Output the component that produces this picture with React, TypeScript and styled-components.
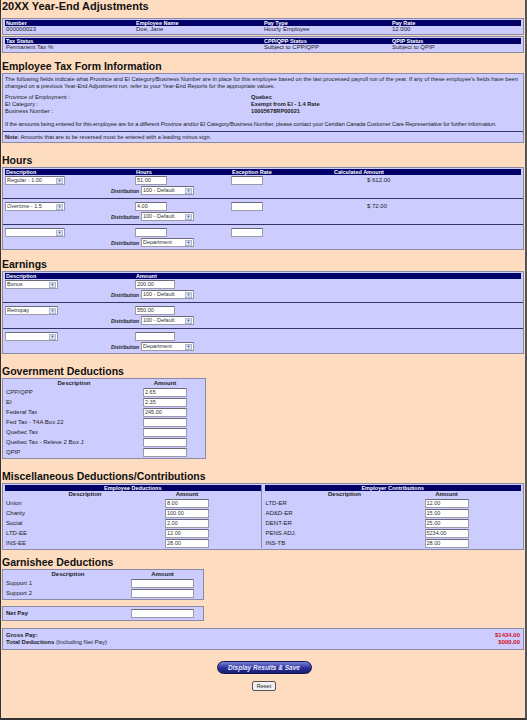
import React from 'react';
import styled, { createGlobalStyle } from 'styled-components';

const Global = createGlobalStyle`
  html, body { margin: 0; padding: 0; background: #fddcbf; }
  * { box-sizing: border-box; }
`;

const Page = styled.div`
  width: 527px;
  height: 720px;
  background: #fddcbf;
  border-left: 1px solid #333;
  border-right: 2px solid #555;
  border-bottom: 2px solid #333;
  font-family: 'Liberation Sans', Arial, sans-serif;
  font-size: 6px;
  color: #222;
  padding: 0 1px;
  overflow: hidden;
`;

const Title = styled.h1`
  margin: 0;
  font-size: 11px;
  line-height: 13px;
  font-weight: bold;
  color: #111;
`;

const Heading = styled.h2`
  margin: ${p => p.$top ?? 8}px 0 1px 0;
  font-size: 10.5px;
  line-height: 12px;
  font-weight: bold;
  color: #111;
`;

const Panel = styled.div`
  background: #ccccff;
  border: 1px solid #8a8aa6;
  width: ${p => p.$w ?? '100%'};
  padding: 1px 2px 1px 2px;
  margin-top: ${p => p.$mt ?? 0}px;
`;

const Grid = styled.div`
  display: grid;
  grid-template-columns: ${p => p.$cols};
  align-items: center;
`;

const Bar = styled(Grid)`
  background: #000066;
  color: #fff;
  font-weight: bold;
  height: 6px;
  line-height: 6px;
  font-size: 5.5px;
  text-align: ${p => p.$center ? 'center' : 'left'};
  padding: 0 1px;
`;

const Cell = styled.div`
  line-height: 7px;
  padding: 0 1px;
  text-align: ${p => p.$align ?? 'left'};
  font-weight: ${p => p.$bold ? 'bold' : 'normal'};
  width: ${p => p.$w ? `${p.$w}px` : 'auto'};
`;

const Text = styled.div`
  line-height: 7px;
  font-size: 5.7px;
  margin: ${p => p.$m ?? '0'};
`;

const Sep = styled.div`
  height: 1px;
  background: #333366;
  margin: 2px -2px;
`;

const Input = styled.div`
  width: ${p => p.$w}px;
  height: 9px;
  background: #fff;
  border: 1px solid #9a9aa8;
  border-top-color: #6a6a78;
  font-size: 5.5px;
  line-height: 7px;
  padding-left: 1px;
  color: #333;
`;

const SelectBox = styled(Input)`
  display: flex;
  justify-content: space-between;
  padding-right: 1px;
`;

const Arrow = styled.span`
  width: 7px;
  height: 6px;
  margin-top: 0.5px;
  background: #dde3f4;
  border: 1px solid #b0b8d0;
  font-size: 4px;
  line-height: 4px;
  text-align: center;
  color: #4a5a90;
`;

const DistLabel = styled.span`
  font-style: italic;
  font-weight: bold;
  font-size: 5px;
  margin-right: 2px;
`;

const EntryRow = styled.div`
  display: grid;
  grid-template-columns: 130px 96px 102px 1fr;
  row-gap: 1px;
  padding: 1px 0;
`;

const DistRow = styled.div`
  grid-column: 1 / 3;
  display: flex;
  align-items: center;
  justify-content: flex-end;
  padding-right: 37px;
`;

const Amount = styled.div`
  padding-left: 34px;
  line-height: 9px;
`;

const Red = styled.span`
  color: #d01020;
  font-weight: bold;
`;

const Center = styled.div`
  display: flex;
  flex-direction: column;
  align-items: center;
  gap: 7px;
  margin-top: 11px;
  padding-left: 2px;
`;

const BigButton = styled.div`
  width: 95px;
  height: 13px;
  border-radius: 7px;
  background: linear-gradient(#7a80d8, #2a2f9a 55%, #1a1d70);
  border: 1px solid #111450;
  color: #e8eaff;
  font-style: italic;
  font-weight: bold;
  font-size: 6.5px;
  line-height: 11px;
  text-align: center;
`;

const Reset = styled.div`
  width: 24px;
  height: 10px;
  background: #f0f0f0;
  border: 1px solid #555;
  border-radius: 2px;
  font-size: 5.5px;
  line-height: 8px;
  text-align: center;
`;

const Split = styled.div`
  display: grid;
  grid-template-columns: 1fr 1fr;
  gap: 3px;
`;

const Sub = styled.div`
  border-right: ${p => p.$line ? '1px solid #8a8aa6' : 'none'};
`;

const Select = ({ v, w = 60 }: { v: string; w?: number }) => (
  <SelectBox $w={w}><span>{v}</span><Arrow>▼</Arrow></SelectBox>
);

type Entry = { d: string; h: string; amt?: string; dist: string };

const hours: Entry[] = [
  { d: 'Regular - 1.00', h: '51.00', amt: '$ 612.00', dist: '100 - Default' },
  { d: 'Overtime - 1.5', h: '4.00', amt: '$ 72.00', dist: '100 - Default' },
  { d: '', h: '', dist: 'Department' },
];
const earnings: Entry[] = [
  { d: 'Bonus', h: '200.00', dist: '100 - Default' },
  { d: 'Retropay', h: '550.00', dist: '100 - Default' },
  { d: '', h: '', dist: 'Department' },
];

const gov = [
  ['CPP/QPP', '2.65'], ['EI', '2.35'], ['Federal Tax', '245.00'], ['Fed Tax - T4A Box 22', ''],
  ['Quebec Tax', ''], ['Quebec Tax - Releve 2 Box J', ''], ['QPIP', ''],
];
const ee = [['Union', '8.00'], ['Charity', '100.00'], ['Social', '2.00'], ['LTD-EE', '12.00'], ['INS-EE', '28.00']];
const er = [['LTD-ER', '12.00'], ['AD&D-ER', '15.00'], ['DENT-ER', '25.00'], ['PENS ADJ.', '5234.00'], ['INS-TB', '28.00']];

const ColHead = ({ cols, w }: { cols: string; w: number }) => (
  <Grid $cols={cols}>
    <Cell $bold $align="center">Description</Cell>
    <Cell $bold $align="center" $w={w}>Amount</Cell>
  </Grid>
);

const AmountRows = ({ rows, cols, w }: { rows: string[][]; cols: string; w: number }) => (
  <>
    {rows.map(([l, v]) => (
      <Grid key={l} $cols={cols} style={{ height: 10 }}>
        <Cell>{l}</Cell>
        <Input $w={w}>{v}</Input>
      </Grid>
    ))}
  </>
);

export default function App() {
  return (
    <Page>
      <Global />
      <Title>20XX Year-End Adjustments</Title>
      <Panel $mt={5}>
        <Bar $cols="130px 128px 128px 1fr">
          <span>Number</span><span>Employee Name</span><span>Pay Type</span><span>Pay Rate</span>
        </Bar>
        <Grid $cols="130px 128px 128px 1fr">
          <Cell>000000023</Cell><Cell>Doe, Jane</Cell><Cell>Hourly Employee</Cell><Cell>12.000</Cell>
        </Grid>
      </Panel>
      <Panel $mt={1}>
        <Bar $cols="258px 128px 1fr">
          <span>Tax Status</span><span>CPP/QPP Status</span><span>QPIP Status</span>
        </Bar>
        <Grid $cols="258px 128px 1fr">
          <Cell>Permanent Tax %</Cell><Cell>Subject to CPP/QPP</Cell><Cell>Subject to QPIP</Cell>
        </Grid>
      </Panel>

      <Heading $top={7}>Employee Tax Form Information</Heading>
      <Panel>
        <Text $m="1px 0 0">
          The following fields indicate what Province and EI Category/Business Number are in place for this employee based on the last processed payroll run of the year. If any of these employee's fields have been changed on a previous Year-End Adjustment run, refer to your Year-End Reports for the appropriate values.
        </Text>
        <Grid $cols="246px 1fr" style={{ marginTop: 4 }}>
          <Text>Province of Employment :</Text><Text><b>Quebec</b></Text>
          <Text>EI Category :</Text><Text><b>Exempt from EI - 1.4 Rate</b></Text>
          <Text>Business Number :</Text><Text><b>10005678RP00021</b></Text>
        </Grid>
        <Text $m="6px 0 3px" style={{ letterSpacing: -0.12 }}>
          If the amounts being entered for this employee are for a different Province and/or EI Category/Business Number, please contact your Ceridian Canada Customer Care Representative for further information.
        </Text>
        <Sep />
        <Text><b>Note</b>: Amounts that are to be reversed must be entered with a leading minus sign.</Text>
      </Panel>

      <Heading $top={11}>Hours</Heading>
      <Panel>
        <Bar $cols="130px 96px 102px 1fr">
          <span>Description</span><span>Hours</span><span>Exception Rate</span><span>Calculated Amount</span>
        </Bar>
        {hours.map((r, i) => (
          <React.Fragment key={i}>
            {i > 0 && <Sep />}
            <EntryRow>
              <Select v={r.d} />
              <Input $w={32}>{r.h}</Input>
              <Input $w={32} />
              <Amount>{r.amt}</Amount>
              <DistRow><DistLabel>Distribution</DistLabel><Select v={r.dist} w={53} /></DistRow>
            </EntryRow>
          </React.Fragment>
        ))}
      </Panel>

      <Heading $top={8}>Earnings</Heading>
      <Panel>
        <Bar $cols="130px 1fr"><span>Description</span><span>Amount</span></Bar>
        {earnings.map((r, i) => (
          <React.Fragment key={i}>
            {i > 0 && <Sep />}
            <EntryRow>
              <Select v={r.d} w={53} />
              <Input $w={40}>{r.h}</Input>
              <span /><span />
              <DistRow><DistLabel>Distribution</DistLabel><Select v={r.dist} w={53} /></DistRow>
            </EntryRow>
          </React.Fragment>
        ))}
      </Panel>

      <Heading $top={11}>Government Deductions</Heading>
      <Panel $w="204px">
        <ColHead cols="138px 1fr" w={44} />
        <AmountRows rows={gov} cols="138px 1fr" w={44} />
      </Panel>

      <Heading $top={11}>Miscellaneous Deductions/Contributions</Heading>
      <Panel>
        <Split>
          <Sub $line>
            <Bar $cols="1fr" $center><span>Employee Deductions</span></Bar>
            <ColHead cols="160px 1fr" w={44} />
            <AmountRows rows={ee} cols="160px 1fr" w={44} />
          </Sub>
          <Sub>
            <Bar $cols="1fr" $center><span>Employer Contributions</span></Bar>
            <ColHead cols="160px 1fr" w={44} />
            <AmountRows rows={er} cols="160px 1fr" w={44} />
          </Sub>
        </Split>
      </Panel>

      <Heading $top={6}>Garnishee Deductions</Heading>
      <Panel $w="202px">
        <ColHead cols="126px 1fr" w={63} />
        <AmountRows rows={[['Support 1', ''], ['Support 2', '']]} cols="126px 1fr" w={63} />
      </Panel>
      <Panel $w="202px" $mt={6}>
        <Grid $cols="126px 1fr" style={{ height: 11 }}>
          <Cell $bold>Net Pay</Cell><Input $w={63} />
        </Grid>
      </Panel>

      <Panel $mt={7} style={{ padding: '3px 2px' }}>
        <Grid $cols="1fr auto">
          <Cell $bold>Gross Pay:</Cell><Cell $align="right"><Red>$1434.00</Red></Cell>
          <Cell><b>Total Deductions</b> (Including Net Pay)</Cell><Cell $align="right"><Red>$000.00</Red></Cell>
        </Grid>
      </Panel>

      <Center>
        <BigButton>Display Results &amp; Save</BigButton>
        <Reset>Reset</Reset>
      </Center>
    </Page>
  );
}
